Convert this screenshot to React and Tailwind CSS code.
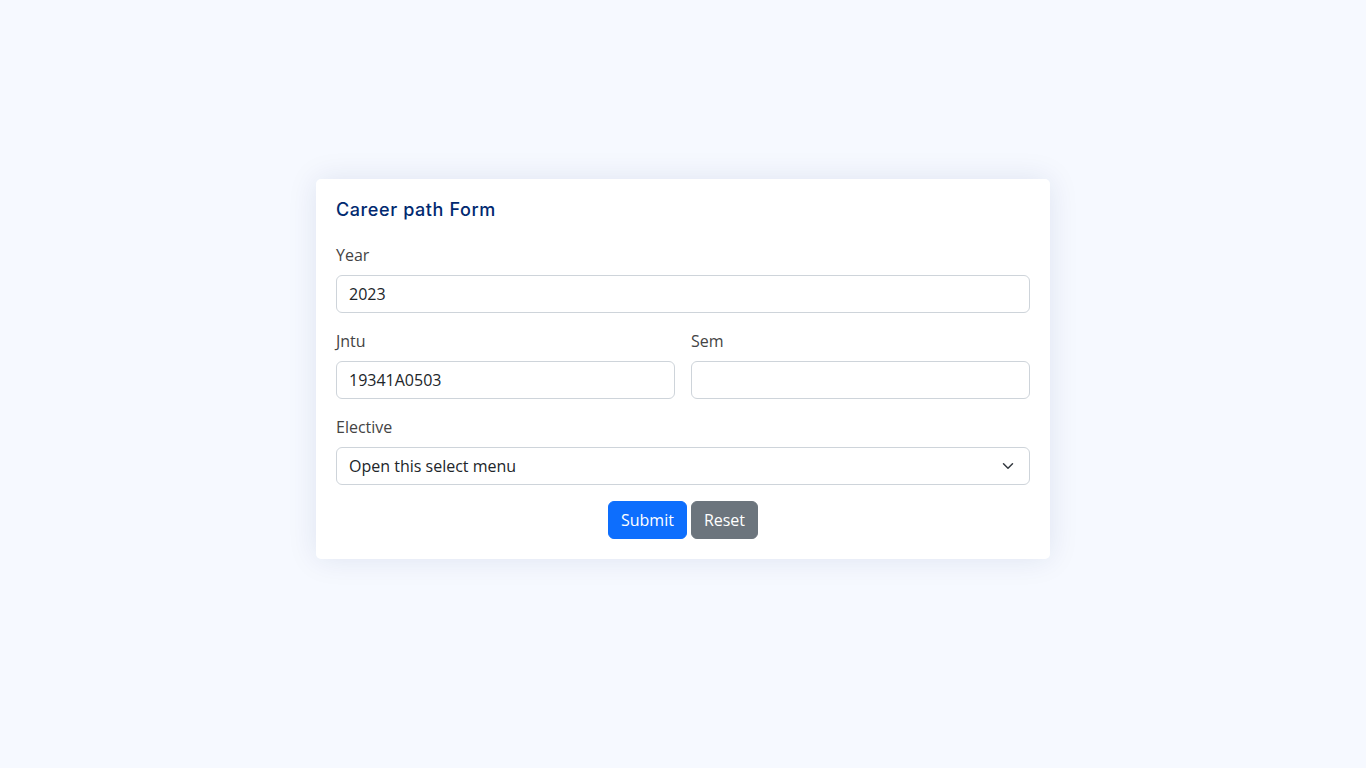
import React from 'react';

const fieldCls =
  'block w-full h-[38px] rounded-[6px] border border-[#ced4da] bg-white px-3 text-base text-[#212529] outline-none';

const Label = ({ children }) => (
  <label className="block mb-2 text-base leading-6 text-[#444444]">{children}</label>
);

export default function App() {
  return (
    <div
      className="min-h-screen bg-[#f6f9ff] flex justify-center pt-[179px]"
      style={{ fontFamily: '"Open Sans", "Liberation Sans", sans-serif' }}
    >
      <div className="w-[734px] h-[380px] bg-white rounded-[5px] shadow-[0_0_30px_rgba(1,41,112,0.1)] px-5 pb-5">
        <h5
          className="pt-5 pb-[15px] text-[18px] leading-[21.6px] font-medium text-[#012970] tracking-[0.6px]"
          style={{ fontFamily: 'Inter, "Noto Sans", sans-serif' }}
        >
          Career path Form
        </h5>

        <div className="mt-[7px]">
          <Label>Year</Label>
          <input className={fieldCls} defaultValue="2023" />
        </div>

        <div className="grid grid-cols-2 gap-4 mt-4">
          <div>
            <Label>Jntu</Label>
            <input className={fieldCls} defaultValue="19341A0503" />
          </div>
          <div>
            <Label>Sem</Label>
            <input className={fieldCls} />
          </div>
        </div>

        <div className="mt-4">
          <Label>Elective</Label>
          <div className="relative">
            <select className={fieldCls + ' appearance-none pr-9'} defaultValue="">
              <option value="">Open this select menu</option>
            </select>
            <svg
              className="absolute right-[14px] top-[13px] pointer-events-none"
              width="16"
              height="12"
              viewBox="0 0 16 16"
            >
              <path
                fill="none"
                stroke="#343a40"
                strokeLinecap="round"
                strokeLinejoin="round"
                strokeWidth="2"
                d="m2 5 6 6 6-6"
              />
            </svg>
          </div>
        </div>

        <div className="mt-4 flex justify-center gap-1">
          <button className="h-[38px] px-3 rounded-[6px] border border-[#0d6efd] bg-[#0d6efd] text-white text-base">
            Submit
          </button>
          <button className="h-[38px] px-3 rounded-[6px] border border-[#6c757d] bg-[#6c757d] text-white text-base">
            Reset
          </button>
        </div>
      </div>
    </div>
  );
}
